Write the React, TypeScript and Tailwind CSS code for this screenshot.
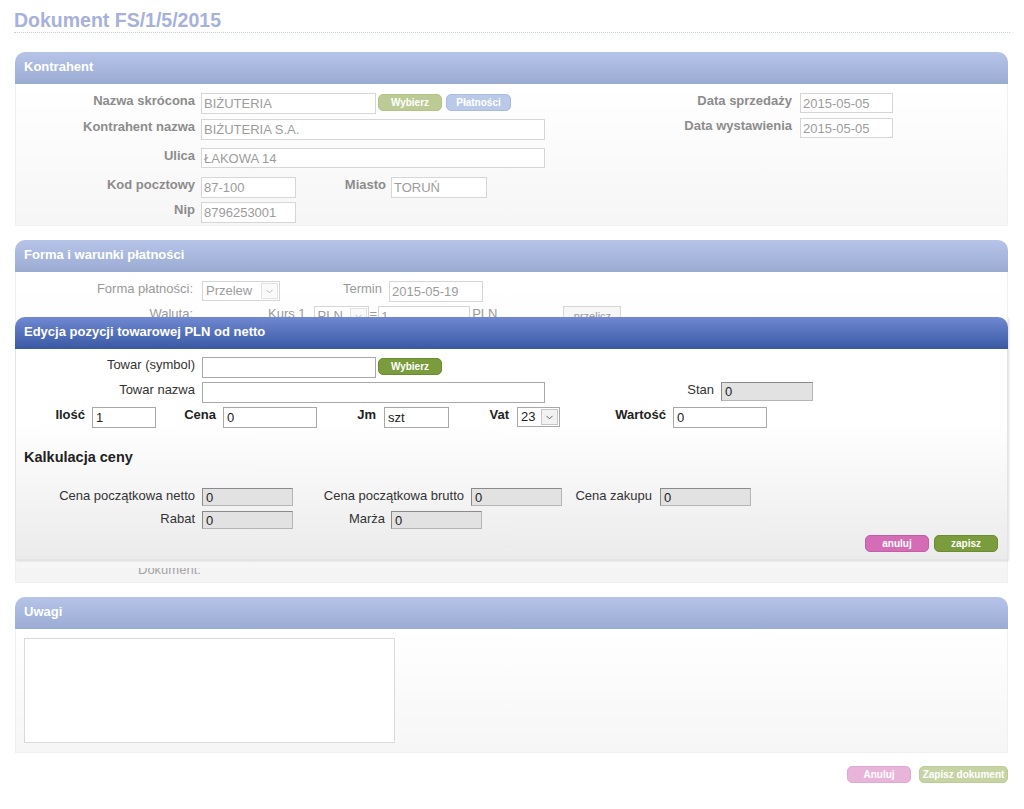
import { ChevronDown } from "lucide-react";

function FadedInput({ value, w, h = "h-[21px]" }: { value: string; w: string; h?: string }) {
    return (
        <div className={`${w} ${h} border border-[#d6d6d6] bg-white text-[13px] font-normal leading-[19px] text-[#9c9c9c] pl-[2px] whitespace-nowrap overflow-hidden`}>
            {value}
        </div>
    );
}

function Input({ value, w, h = "h-[21px]", disabled = false }: { value: string; w: string; h?: string; disabled?: boolean }) {
    return (
        <div
            className={`${w} ${h} border text-[13px] font-normal leading-[17px] text-[#222] pl-[3px] whitespace-nowrap overflow-hidden ${
                disabled
                    ? "bg-[#e2e2e2] border-t-[#8a8a8a] border-l-[#8a8a8a] border-r-[#b5b5b5] border-b-[#b5b5b5]"
                    : "bg-white border-[#a9a9a9] pt-[1px]"
            }`}
        >
            {value}
        </div>
    );
}

function Select({ value, w, faded = false }: { value: string; w: string; faded?: boolean }) {
    return (
        <div className={`${w} h-[20px] flex border bg-white font-normal ${faded ? "border-[#d6d6d6] text-[#9c9c9c]" : "border-[#a9a9a9] text-[#222]"}`}>
            <div className="flex-1 pl-[3px] text-[13px] leading-[18px]">{value}</div>
            <div className={`w-[17px] my-[1px] mr-[1px] flex items-center justify-center border ${faded ? "border-[#e2e2e2] bg-[#fafafa] text-[#b5b5b5]" : "border-[#c7c7c7] bg-[#f2f2f2] text-[#555]"}`}>
                <ChevronDown size={11} strokeWidth={2} />
            </div>
        </div>
    );
}

function Btn({ label, className }: { label: string; className: string }) {
    return (
        <div className={`h-[17px] rounded-[5px] border text-white text-[10px] font-bold leading-[15px] text-center ${className}`}>
            {label}
        </div>
    );
}

function Panel({ title, bodyClass, children }: { title: string; bodyClass: string; children?: React.ReactNode }) {
    return (
        <div className="ml-[1px] w-[993px]">
            <div className="h-[32px] rounded-t-[10px] bg-linear-to-b from-[#b7c4ea] to-[#9aabd2] pl-[9px] text-white font-bold text-[13px] leading-[30px]">
                {title}
            </div>
            <div className={`border border-t-0 border-[#f0f0f0] bg-linear-to-b from-white to-[#f6f6f6] ${bodyClass}`}>{children}</div>
        </div>
    );
}

export default function App() {
    return (
        <div className="relative w-[1024px] h-[809px] overflow-hidden bg-white font-['Liberation_Sans',Arial,sans-serif]">
            <div className="px-[14px] pt-[8px]">
                {/* Title */}
                <h1 className="text-[19.5px] leading-[24px] font-bold text-[#a7b1da] border-b border-dotted border-[#c9cee6] w-[996px]">
                    Dokument FS/1/5/2015
                </h1>

                {/* Kontrahent */}
                <div className="mt-[19px]">
                    <Panel title="Kontrahent" bodyClass="h-[142px] flex">
                        <div className="w-[600px] text-[13px] font-bold text-[#8c8c8c]">
                            <div className="mt-[9px] flex items-start">
                                <div className="w-[179px] text-right leading-[16px]">Nazwa skrócona</div>
                                <div className="ml-[6px]">
                                    <FadedInput value="BIŻUTERIA" w="w-[175px]" />
                                </div>
                                <Btn label="Wybierz" className="ml-[2px] mt-[1px] w-[64px] bg-[#bccb95] border-[#b2c288]" />
                                <Btn label="Płatności" className="ml-[4px] mt-[1px] w-[65px] bg-[#b9c9e7] border-[#a9bbdf]" />
                            </div>
                            <div className="mt-[5px] flex items-start">
                                <div className="w-[179px] text-right leading-[16px]">Kontrahent nazwa</div>
                                <div className="ml-[6px]">
                                    <FadedInput value="BIŻUTERIA S.A." w="w-[344px]" />
                                </div>
                            </div>
                            <div className="mt-[8px] flex items-start">
                                <div className="w-[179px] text-right leading-[16px]">Ulica</div>
                                <div className="ml-[6px]">
                                    <FadedInput value="ŁAKOWA 14" w="w-[344px]" h="h-[20px]" />
                                </div>
                            </div>
                            <div className="mt-[9px] flex items-start">
                                <div className="w-[179px] text-right leading-[16px]">Kod pocztowy</div>
                                <div className="ml-[6px]">
                                    <FadedInput value="87-100" w="w-[95px]" />
                                </div>
                                <div className="w-[90px] text-right leading-[16px]">Miasto</div>
                                <div className="ml-[5px]">
                                    <FadedInput value="TORUŃ" w="w-[96px]" />
                                </div>
                            </div>
                            <div className="mt-[4px] flex items-start">
                                <div className="w-[179px] text-right leading-[16px]">Nip</div>
                                <div className="ml-[6px]">
                                    <FadedInput value="8796253001" w="w-[95px]" />
                                </div>
                            </div>
                        </div>
                        <div className="text-[13px] font-bold text-[#8c8c8c]">
                            <div className="mt-[9px] flex items-start">
                                <div className="w-[176px] text-right leading-[16px]">Data sprzedaży</div>
                                <div className="ml-[8px]">
                                    <FadedInput value="2015-05-05" w="w-[93px]" h="h-[20px]" />
                                </div>
                            </div>
                            <div className="mt-[5px] flex items-start">
                                <div className="w-[176px] text-right leading-[16px]">Data wystawienia</div>
                                <div className="ml-[8px]">
                                    <FadedInput value="2015-05-05" w="w-[93px]" h="h-[20px]" />
                                </div>
                            </div>
                        </div>
                    </Panel>
                </div>

                {/* Forma i warunki płatności */}
                <div className="mt-[14px]">
                    <Panel title="Forma i warunki płatności" bodyClass="h-[311px] flex flex-col text-[13px] text-[#9a9a9a]">
                        <div className="mt-[9px] flex items-start">
                            <div className="w-[177px] text-right leading-[16px]">Forma płatności:</div>
                            <div className="ml-[9px]">
                                <Select value="Przelew" w="w-[78px]" faded />
                            </div>
                            <div className="w-[102px] text-right leading-[16px]">Termin</div>
                            <div className="ml-[7px]">
                                <FadedInput value="2015-05-19" w="w-[94px]" />
                            </div>
                        </div>
                        <div className="mt-[4px] flex items-start">
                            <div className="w-[177px] text-right leading-[16px]">Waluta:</div>
                            <div className="ml-[75px] leading-[16px]">Kurs 1</div>
                            <div className="ml-[8px]">
                                <Select value="PLN" w="w-[55px]" faded />
                            </div>
                            <div className="ml-[1px] leading-[16px]">=</div>
                            <div className="ml-[1px]">
                                <FadedInput value="1" w="w-[92px]" h="h-[20px]" />
                            </div>
                            <div className="ml-[2px] leading-[16px]">PLN</div>
                            <div className="ml-[66px] w-[58px] h-[20px] border border-[#d6d6d6] bg-[#f7f7f7] text-[11px] text-center leading-[18px]">przelicz</div>
                        </div>
                        <div className="mt-auto mb-[1px] h-[13px] overflow-hidden bg-[#f4f4f4]">
                            <div className="-mt-[6px] ml-[122px] leading-[16px] text-[#a5a5a5]">Dokument:</div>
                        </div>
                    </Panel>
                </div>

                {/* Uwagi */}
                <div className="mt-[14px]">
                    <Panel title="Uwagi" bodyClass="h-[124px] pt-[9px] pl-[8px]">
                        <div className="w-[371px] h-[105px] border border-[#dadada] bg-white" />
                    </Panel>
                </div>

                {/* Bottom actions */}
                <div className="mt-[13px] w-[994px] flex justify-end gap-[8px]">
                    <Btn label="Anuluj" className="w-[64px] bg-[#e8b4da] border-[#ddaad0]" />
                    <Btn label="Zapisz dokument" className="w-[89px] bg-[#c6d4a4] border-[#bccb98]" />
                </div>
            </div>

            {/* Modal: Edycja pozycji */}
            <div className="absolute left-[15px] top-[317px] w-[993px] h-[243px] shadow-[1px_1px_2px_rgba(0,0,0,0.12)]">
                <div className="h-[32px] rounded-t-[10px] bg-linear-to-b from-[#7089d2] to-[#3a59a3] pl-[9px] text-white font-bold text-[13px] leading-[30px]">
                    Edycja pozycji towarowej PLN od netto
                </div>
                <div className="h-[211px] border border-t-0 border-[#e4e4e4] bg-linear-to-b from-white from-35% to-[#ebebeb] text-[13px] text-[#333]">
                    <div className="pt-[8px] flex items-start">
                        <div className="w-[179px] text-right leading-[16px]">Towar (symbol)</div>
                        <div className="ml-[7px]">
                            <Input value="" w="w-[174px]" />
                        </div>
                        <Btn label="Wybierz" className="ml-[2px] mt-[1px] w-[64px] bg-[#7a9c3c] border-[#6b8c31]" />
                    </div>
                    <div className="mt-[4px] flex items-start">
                        <div className="w-[179px] text-right leading-[16px]">Towar nazwa</div>
                        <div className="ml-[7px]">
                            <Input value="" w="w-[343px]" />
                        </div>
                        <div className="w-[169px] text-right leading-[16px]">Stan</div>
                        <div className="ml-[7px]">
                            <Input value="0" w="w-[92px]" h="h-[19px]" disabled />
                        </div>
                    </div>
                    <div className="mt-[4px] flex items-start font-bold text-[#222]">
                        <div className="w-[69px] text-right leading-[16px]">Ilość</div>
                        <div className="ml-[7px]">
                            <Input value="1" w="w-[64px]" />
                        </div>
                        <div className="w-[60px] text-right leading-[16px]">Cena</div>
                        <div className="ml-[7px]">
                            <Input value="0" w="w-[94px]" />
                        </div>
                        <div className="w-[59px] text-right leading-[16px]">Jm</div>
                        <div className="ml-[8px]">
                            <Input value="szt" w="w-[65px]" />
                        </div>
                        <div className="w-[60px] text-right leading-[16px]">Vat</div>
                        <div className="ml-[8px]">
                            <Select value="23" w="w-[43px]" />
                        </div>
                        <div className="w-[106px] text-right leading-[16px]">Wartość</div>
                        <div className="ml-[7px]">
                            <Input value="0" w="w-[94px]" />
                        </div>
                    </div>

                    <h2 className="mt-[20px] pl-[8px] text-[14.5px] leading-[18px] font-bold text-[#222]">Kalkulacja ceny</h2>

                    <div className="mt-[22px] flex items-start">
                        <div className="w-[179px] text-right leading-[16px]">Cena początkowa netto</div>
                        <div className="ml-[7px]">
                            <Input value="0" w="w-[91px]" h="h-[18px]" disabled />
                        </div>
                        <div className="w-[171px] text-right leading-[16px]">Cena początkowa brutto</div>
                        <div className="ml-[7px]">
                            <Input value="0" w="w-[91px]" h="h-[18px]" disabled />
                        </div>
                        <div className="w-[90px] text-right leading-[16px]">Cena zakupu</div>
                        <div className="ml-[8px]">
                            <Input value="0" w="w-[91px]" h="h-[18px]" disabled />
                        </div>
                    </div>
                    <div className="mt-[5px] flex items-start">
                        <div className="w-[179px] text-right leading-[16px]">Rabat</div>
                        <div className="ml-[7px]">
                            <Input value="0" w="w-[91px]" h="h-[18px]" disabled />
                        </div>
                        <div className="w-[92px] text-right leading-[16px]">Marża</div>
                        <div className="ml-[6px]">
                            <Input value="0" w="w-[91px]" h="h-[18px]" disabled />
                        </div>
                    </div>

                    <div className="mt-[6px] pr-[9px] flex justify-end gap-[5px]">
                        <Btn label="anuluj" className="w-[64px] bg-[#d46db5] border-[#c25ea3]" />
                        <Btn label="zapisz" className="w-[64px] bg-[#7a9c3c] border-[#6b8c31]" />
                    </div>
                </div>
            </div>
        </div>
    );
}
